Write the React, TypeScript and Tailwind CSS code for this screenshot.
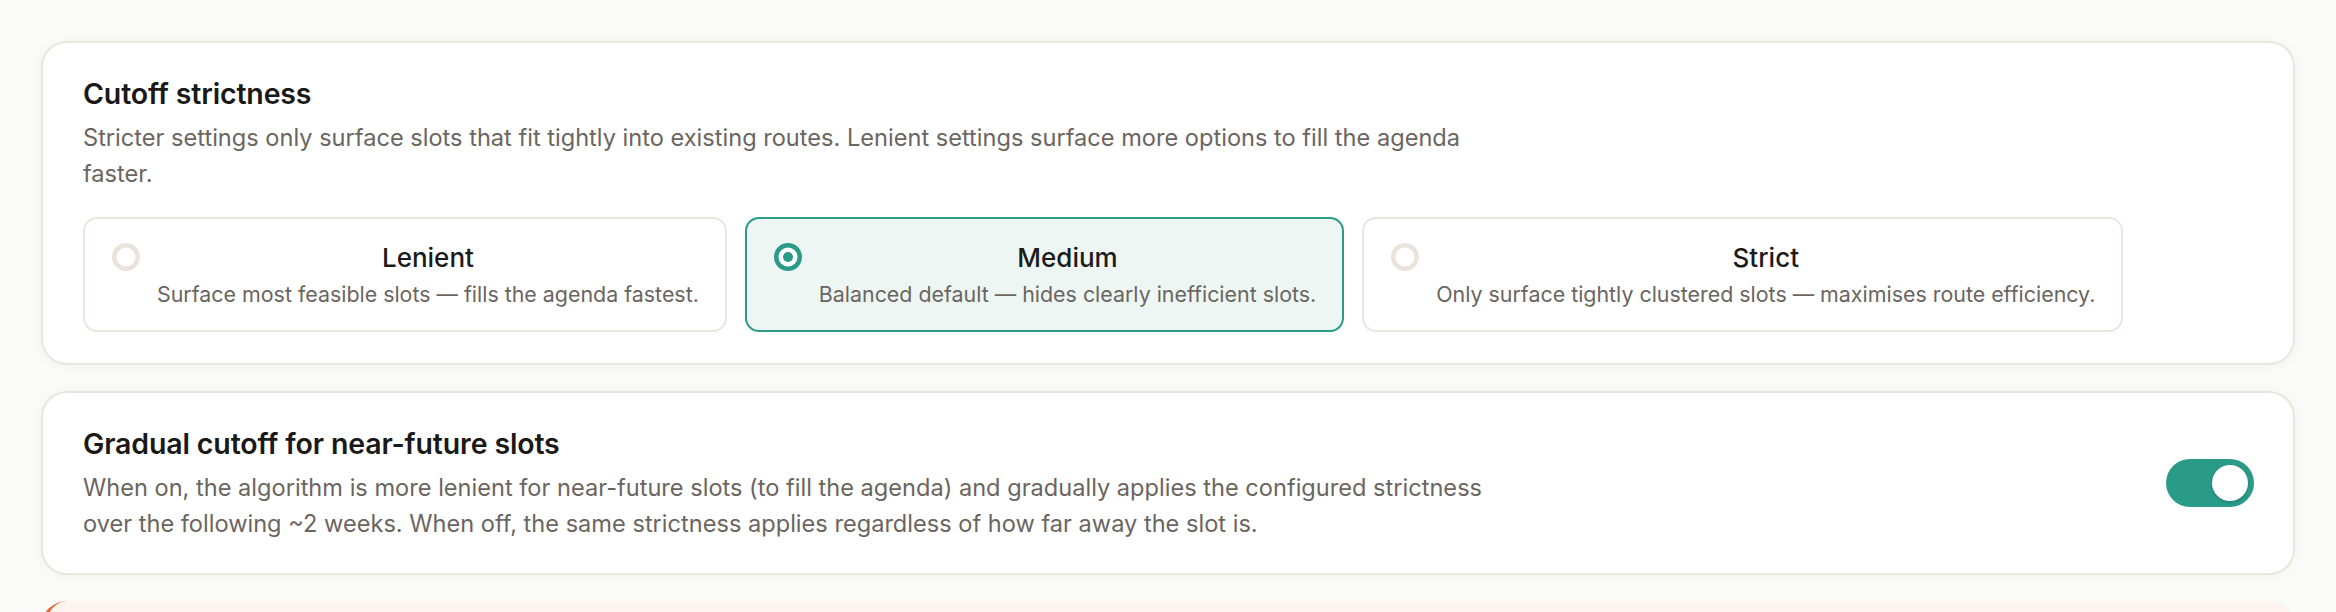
import React from "react";

type Opt = { id: string; title: string; desc: string };

const OPTIONS: Opt[] = [
  { id: "lenient", title: "Lenient", desc: "Surface most feasible slots — fills the agenda fastest." },
  { id: "medium", title: "Medium", desc: "Balanced default — hides clearly inefficient slots." },
  { id: "strict", title: "Strict", desc: "Only surface tightly clustered slots — maximises route efficiency." },
];

function Radio({ checked }: { checked: boolean }) {
  return (
    <svg width="28" height="28" viewBox="0 0 28 28" className="shrink-0 mt-[3px]">
      <circle cx="14" cy="14" r="11.75" fill="white" stroke={checked ? "#2a9b89" : "#e9e3dc"} strokeWidth="4.5" />
      {checked && <circle cx="14" cy="14" r="5" fill="#2a9b89" />}
    </svg>
  );
}

function Option({ opt, selected }: { opt: Opt; selected: boolean }) {
  return (
    <div
      className={
        selected
          ? "flex items-start gap-[17px] rounded-[14px] border-2 border-[#2a9b89] bg-[#eef6f4] pl-[27px] pr-[26px] pt-[21px] pb-[21px]"
          : "flex items-start gap-[17px] rounded-[14px] border-2 border-[#ebe5de] bg-white pl-[27px] pr-[26px] pt-[21px] pb-[21px]"
      }
    >
      <Radio checked={selected} />
      <div className="flex-1 text-center">
        <div className="text-[26px] leading-[36px] font-medium text-[#1c1b1a]">{opt.title}</div>
        <div className="mt-[3px] text-[21.4px] leading-[30px] text-[#6b655f] whitespace-nowrap">{opt.desc}</div>
      </div>
    </div>
  );
}

export default function App() {
  return (
    <div
      className="h-[612px] overflow-hidden bg-[#fafaf9] p-[41px] flex flex-col gap-[26px]"
      style={{ fontFamily: "Inter, 'Noto Sans', sans-serif" }}
    >
      <section className="shrink-0 rounded-[26px] border-2 border-[#ebe5de] bg-white px-[40px] pt-[31px] pb-[31px] shadow-[0_1px_14px_rgba(0,0,0,0.035)]">
        <h2 className="text-[28.5px] leading-[40px] font-semibold text-[#1a1918] tracking-[-0.005em]">Cutoff strictness</h2>
        <p className="mt-[6px] max-w-[1420px] text-[23.6px] leading-[36px] text-[#6b655f]">
          Stricter settings only surface slots that fit tightly into existing routes. Lenient settings surface more options to fill the agenda faster.
        </p>
        <div className="mt-[25px] flex flex-wrap gap-[18px]">
          {OPTIONS.map((o) => (
            <Option key={o.id} opt={o} selected={o.id === "medium"} />
          ))}
        </div>
      </section>

      <section className="shrink-0 flex items-center justify-between rounded-[26px] border-2 border-[#ebe5de] bg-white pl-[40px] pr-[39px] pt-[31px] pb-[31px] shadow-[0_1px_14px_rgba(0,0,0,0.035)]">
        <div>
          <h2 className="text-[28.5px] leading-[40px] font-semibold text-[#1a1918] tracking-[-0.005em]">Gradual cutoff for near-future slots</h2>
          <p className="mt-[6px] max-w-[1420px] text-[23.6px] leading-[36px] text-[#6b655f]">
            When on, the algorithm is more lenient for near-future slots (to fill the agenda) and gradually applies the configured strictness over the following ~2 weeks. When off, the same strictness applies regardless of how far away the slot is.
          </p>
        </div>
        <button
          type="button"
          aria-pressed="true"
          className="flex h-[48px] w-[88px] shrink-0 items-center justify-end rounded-full bg-[#2b9b89] pr-[6px]"
        >
          <span className="block h-[36px] w-[36px] rounded-full bg-white shadow-[0_1px_3px_rgba(0,0,0,0.25)]" />
        </button>
      </section>

      <section className="h-[120px] shrink-0 rounded-[26px] border-l-[5px] border-[#e8693a] bg-[#fdf3ef]" />
    </div>
  );
}
